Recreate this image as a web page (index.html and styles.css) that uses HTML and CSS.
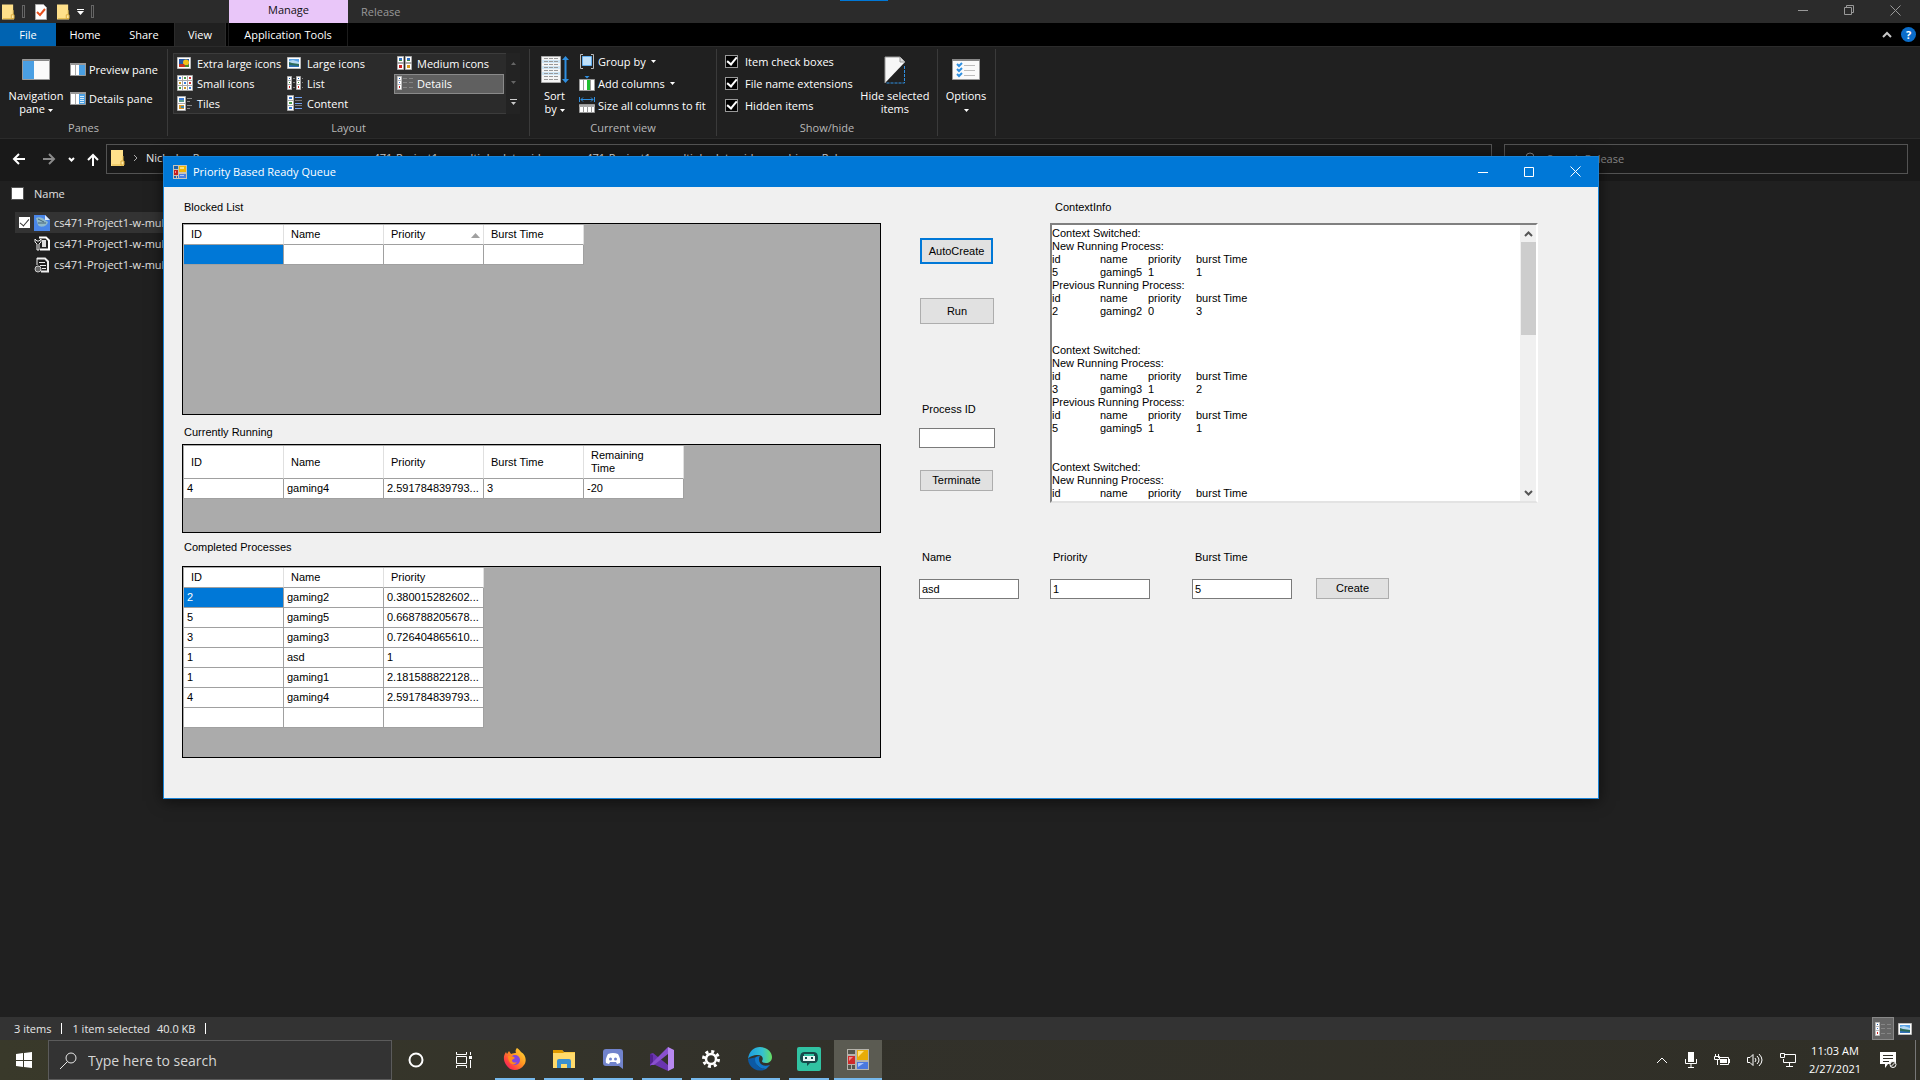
FILE: index.html
```html
<!DOCTYPE html>
<html lang="en">
<head>
<meta charset="utf-8">
<title>Priority Based Ready Queue</title>
<link rel="stylesheet" href="styles.css">
</head>
<body>
<svg class="defs" aria-hidden="true">
  <symbol id="folder" viewBox="0 0 14 16"><path d="M0 0h12v12h1v4H0z" fill="#ffe08a"/><path d="M12 6v9H1" fill="none" stroke="#e6bd4f"/><path d="M10 11h3v4h-3z" fill="#ffe9a6" stroke="#d9a93a"/></symbol>
  <symbol id="photo" viewBox="0 0 14 12"><path d="M.5.5h13v11H.5z" fill="#fff" stroke="#bbb"/><path d="M2 2h10v8H2z" fill="#5aa3e6"/><path d="M2 4l4-1 6 2v2H2z" fill="#b5d8f2"/><path d="M2 5l3 1 7 1v2H2z" fill="#2c6b5a"/><path d="M2 8l10 1v1H2z" fill="#2f6fb8"/></symbol>
  <symbol id="pansy" viewBox="0 0 14 12"><path d="M.5.5h13v11H.5z" fill="#fff" stroke="#bbb"/><path d="M2 2h10v8H2z" fill="#2458a8"/><circle cx="9" cy="5.500" r="3" fill="#f2c21b"/><path d="M2 7h5l2 3H2z" fill="#c73320"/><path d="M8 8h4v2H8z" fill="#4a8a2c"/></symbol>
  <symbol id="medium" viewBox="0 0 15 14"><path d="M.5.5h6v6h-6zM8.500.5h6v6h-6zM.5 7.500h6v6h-6zM8.500 7.500h6v6h-6z" fill="#fff" stroke="#aaa"/><path d="M2 2h3v2H2zM10 2h3v2h-3z" fill="#2f6fc4"/><path d="M2 4h3v1H2zM10 4h3v1h-3z" fill="#3b8b4a"/><path d="M2 9h3v3H2z" fill="#c22"/><path d="M10 9h3v3h-3z" fill="#d69b1c"/></symbol>
  <symbol id="small" viewBox="0 0 16 16"><path d="M.5.5h15v15H.5zM5.500 0v16M10.500 0v16M0 5.500h16M0 10.500h16" fill="#fff" stroke="#aaa"/><path d="M2 2h2v2H2zM7 7h2v2H7zM12 12h2v2h-2z" fill="#3a7bd5"/><path d="M7 2h2v2H7zM2 12h2v2H2z" fill="#4a9a4a"/><path d="M12 2h2v2h-2zM12 7h2v2h-2z" fill="#c33"/><path d="M2 7h2v2H2zM7 12h2v2H7z" fill="#c9962a"/></symbol>
  <symbol id="list" viewBox="0 0 16 14"><path d="M.5.5h4v4h-4zM.5 4.500h4v4h-4zM.5 8.500h4v5h-4zM9.500.5h4v4h-4zM9.500 4.500h4v4h-4zM9.500 8.500h4v5h-4z" fill="#fff" stroke="#aaa"/><path d="M2 2h1v1H2zM11 2h1v1h-1z" fill="#15a"/><path d="M2 6h1v1H2zM11 6h1v1h-1z" fill="#383"/><path d="M2 10h1v2H2zM11 10h1v2h-1z" fill="#c22"/><path d="M6 2.500h2M6 6.500h2M6 11.500h2M15 2.500h1M15 6.500h1M15 11.500h1" stroke="#888"/></symbol>
  <symbol id="details" viewBox="0 0 16 14"><path d="M.5.5h4v4h-4zM.5 4.500h4v4h-4zM.5 8.500h4v5h-4z" fill="#fff" stroke="#bbb"/><path d="M2 2h1v1H2z" fill="#15a"/><path d="M2 6h1v1H2z" fill="#47c"/><path d="M2 10h1v2H2z" fill="#c22"/><path d="M6 2.500h4M12 2.500h4M6 6.500h4M12 6.500h4M6 11.500h4M12 11.500h4" stroke="#858585"/></symbol>
  <symbol id="tiles" viewBox="0 0 16 15"><path d="M.5.5h8v7h-8zM.5 7.500h8v7h-8z" fill="#fff" stroke="#aaa"/><path d="M2 2h5v2H2z" fill="#3a7bd5"/><path d="M2 4h5v2H2z" fill="#5a9a8a"/><path d="M2 9h5v4H2z" fill="#d6952a"/><path d="M4 10h3v2H4z" fill="#48a"/><path d="M10 2.500h5M10 5.500h3M10 9.500h5M10 12.500h3" stroke="#888"/></symbol>
  <symbol id="content" viewBox="0 0 16 16"><path d="M.5.5h6v5h-6zM.5 5.500h6v5h-6zM.5 10.500h6v5h-6z" fill="#fff" stroke="#aaa"/><path d="M2 2h3v2H2zM2 12h3v2H2z" fill="#3a7bd5"/><path d="M2 7h3v2H2z" fill="#4a9a4a"/><path d="M8 2.500h7M8 8.500h7M8 13.500h7" stroke="#6f9ff0"/><path d="M8 5.500h7M8 10.500h7" stroke="#777"/></symbol>
  <symbol id="form" viewBox="0 0 14 14"><path d="M0 0h14v14H0z" fill="#c9c4b8"/><path d="M1 1h4v3H1zM1 11h2v2H1zM4 11h1v2H4z" fill="#1b62ad"/><path d="M6 1h7v6H6z" fill="#f2b705"/><path d="M7 2h4v2H7z" fill="#ffe27a"/><path d="M1 5h4v5H1z" fill="#c21f1f"/><path d="M2 6h1v2H2z" fill="#f59090"/><path d="M6 9h7v4H6z" fill="#4d7fe0"/><path d="M7 10h4v1H7z" fill="#a9c5ff"/></symbol>
  <symbol id="close" viewBox="0 0 11 11"><path d="M.5.5l10 10M10.500.5l-10 10" stroke="currentColor" fill="none"/></symbol>
  <symbol id="minimize" viewBox="0 0 10 10"><path d="M0 5.500h10" stroke="currentColor"/></symbol>
  <symbol id="drop" viewBox="0 0 5 3"><path d="M0 0h5L2.500 3z" fill="currentColor"/></symbol>
</svg>

<main class="explorer">
  <header class="titlebar">
    <div class="quick">
      <svg width="13" height="16"><use href="#folder"/></svg>
      <i class="grip"></i>
      <svg width="12" height="16" viewBox="0 0 12 16"><path d="M.5.5h8l3 3v12H.5z" fill="#fff" stroke="#aaa"/><path d="M2 8l3 3 5-6" fill="none" stroke="#e8501e" stroke-width="2"/></svg>
      <svg width="13" height="16"><use href="#folder"/></svg>
      <svg class="more" width="7" height="6" viewBox="0 0 7 6"><path d="M0 .5h7" stroke="#fff"/><path d="M0 2h7L3.500 6z" fill="#fff"/></svg>
      <i class="grip"></i>
    </div>
    <div class="context-tab">Manage</div>
    <span class="window-name">Release</span>
    <i class="marker"></i>
    <div class="controls">
      <button aria-label="Minimize Release"><svg width="10" height="10"><use href="#minimize"/></svg></button>
      <button aria-label="Restore Release"><svg width="10" height="10" viewBox="0 0 10 10"><path d="M.5 2.500h7v7h-7zM2.500 2V.5h7v7H8" fill="none" stroke="currentColor"/></svg></button>
      <button aria-label="Close Release"><svg width="11" height="11"><use href="#close"/></svg></button>
    </div>
  </header>

  <nav class="tabs">
    <button class="tab file">File</button>
    <button class="tab home">Home</button>
    <button class="tab share">Share</button>
    <button class="tab view">View</button>
    <button class="tab tools">Application Tools</button>
    <div class="tabs-end">
      <svg width="10" height="7" viewBox="0 0 10 7"><path d="M1 6l4-4 4 4" fill="none" stroke="#c8c8c8" stroke-width="2"/></svg>
      <button class="help" aria-label="Help">?</button>
    </div>
  </nav>

  <section class="ribbon">
    <div class="group panes">
      <div class="group-body">
        <button class="big">
          <svg width="28" height="21" viewBox="0 0 28 21"><path d="M.5.5h27v20H.5z" fill="#fafafa" stroke="#9a9a9a"/><path d="M1 1h26v1H1z" fill="#888"/><path d="M1 2h11v18H1z" fill="#4a9fe3"/></svg>
          <span>Navigation<br>pane <svg width="5" height="3"><use href="#drop"/></svg></span>
        </button>
        <div class="stack pane-stack">
          <button class="small"><svg width="16" height="13" viewBox="0 0 16 13"><path d="M.5.5h15v12H.5z" fill="#fff" stroke="#999"/><path d="M0 0h16v2H0z" fill="#999"/><path d="M5.500 2v10" stroke="#aaa"/><path d="M9 2h6v10H9z" fill="#4a9fe3"/></svg>Preview pane</button>
          <button class="small"><svg width="16" height="13" viewBox="0 0 16 13"><path d="M.5.5h15v12H.5z" fill="#fff" stroke="#999"/><path d="M0 0h16v2H0z" fill="#999"/><path d="M5.500 2v10" stroke="#aaa"/><path d="M9 2h6v10H9z" fill="#4a9fe3"/><path d="M10 4.500h4M10 6.500h4M10 8.500h4M10 10.500h4" stroke="#d9ecfb"/></svg>Details pane</button>
        </div>
      </div>
      <h2>Panes</h2>
    </div>
    <div class="group layout">
      <div class="group-body">
        <div class="gallery">
          <button><svg width="14" height="12"><use href="#pansy"/></svg>Extra large icons</button>
          <button><svg width="14" height="12"><use href="#photo"/></svg>Large icons</button>
          <button><svg width="15" height="14"><use href="#medium"/></svg>Medium icons</button>
          <button><svg width="16" height="16"><use href="#small"/></svg>Small icons</button>
          <button><svg width="16" height="14"><use href="#list"/></svg>List</button>
          <button class="selected"><svg width="16" height="14"><use href="#details"/></svg>Details</button>
          <button><svg width="16" height="15"><use href="#tiles"/></svg>Tiles</button>
          <button><svg width="16" height="16"><use href="#content"/></svg>Content</button>
        </div>
        <div class="gallery-scroll">
          <svg width="5" height="3" viewBox="0 0 5 3"><path d="M0 3h5L2.500 0z" fill="#666"/></svg>
          <svg width="5" height="3" class="dim"><use href="#drop"/></svg>
          <svg width="7" height="6" viewBox="0 0 7 6"><path d="M0 .5h7" stroke="#ccc"/><path d="M1 3h5L3.500 6z" fill="#ccc"/></svg>
        </div>
      </div>
      <h2>Layout</h2>
    </div>
    <div class="group current">
      <div class="group-body">
        <button class="big sort">
          <svg width="28" height="27" viewBox="0 0 28 27"><path d="M.5.5h19v26H.5z" fill="#f5f5f5" stroke="#aaa"/><path d="M1 4h18v3H1zM1 10h18v3H1zM1 16h18v3H1z" fill="#cfe6f5"/><path d="M3 2.500h14M3 5.500h14M3 8.500h14M3 11.500h14M3 14.500h14M3 17.500h14M3 20.500h14M3 23.500h14" stroke="#999" stroke-dasharray="4 1"/><path d="M24.500 2v23" stroke="#2f8fe0" stroke-width="2"/><path d="M21 4l3.500-4L28 4zM21 23l3.500 4 3.500-4z" fill="#2f8fe0"/></svg>
          <span>Sort<br>by <svg width="5" height="3"><use href="#drop"/></svg></span>
        </button>
        <div class="stack">
          <button class="small"><svg width="16" height="15" viewBox="0 0 16 15"><path d="M4 .5H1.500v14H4M12 .5h2.500v14H12" fill="none" stroke="#bbb"/><path d="M3.500 2.500h9v9h-9z" fill="#bfe0fa" stroke="#62aef0"/></svg>Group by <svg width="5" height="3"><use href="#drop"/></svg></button>
          <button class="small"><svg width="16" height="15" viewBox="0 0 16 15"><path d="M5.500 0h5L8 2.500z" fill="#2f8fe0"/><path d="M.5 3.500h15v11H.5z" fill="#fff" stroke="#999"/><path d="M4.500 4v10M11.500 4v10" stroke="#999"/><path d="M8 4h3v10H8z" fill="#1fbf2f"/></svg>Add columns <svg width="5" height="3"><use href="#drop"/></svg></button>
          <button class="small"><svg width="16" height="16" viewBox="0 0 16 16"><path d="M.5 0v5M15.500 0v5M2 2.500h12M4 .5l-2 2 2 2M12 .5l2 2-2 2" fill="none" stroke="#2f8fe0"/><path d="M.5 7.500h15v8H.5z" fill="#fff" stroke="#999"/><path d="M0 8h16v2H0z" fill="#aaa"/><path d="M4.500 10v5M8.500 10v5M12.500 10v5" stroke="#999"/></svg>Size all columns to fit</button>
        </div>
      </div>
      <h2>Current view</h2>
    </div>
    <div class="group showhide">
      <div class="group-body">
        <div class="stack">
          <label class="tick"><input type="checkbox" checked>Item check boxes</label>
          <label class="tick"><input type="checkbox" checked>File name extensions</label>
          <label class="tick"><input type="checkbox" checked>Hidden items</label>
        </div>
        <button class="big hide">
          <svg width="22" height="28" viewBox="0 0 22 28"><path d="M1 1h15l5 5L1 27z" fill="#f7f7f7"/><path d="M1 27V1h15l4 5" fill="none" stroke="#999"/><path d="M16 1v5h5" fill="#ddd" stroke="#999"/><path d="M20.500 10v17H2" fill="none" stroke="#2f8fe0" stroke-dasharray="3 1"/></svg>
          <span>Hide selected<br>items</span>
        </button>
      </div>
      <h2>Show/hide</h2>
    </div>
    <div class="group options">
      <div class="group-body">
        <button class="big">
          <svg width="28" height="21" viewBox="0 0 28 21"><path d="M.5.5h27v20H.5z" fill="#fafafa" stroke="#9a9a9a"/><path d="M0 0h28v2H0z" fill="#888"/><path d="M5 5l2 2 3-3M5 10l2 2 3-3M5 15l2 2 3-3" fill="none" stroke="#2f8fe0" stroke-width="2"/><path d="M12 6.500h11M12 11.500h11M12 16.500h11" stroke="#bbb"/></svg>
          <span>Options<br><svg width="5" height="3"><use href="#drop"/></svg></span>
        </button>
      </div>
    </div>
  </section>

  <section class="location">
    <div class="history">
      <svg width="13" height="12" viewBox="0 0 13 12"><path d="M13 6H2M7 1L2 6l5 5" fill="none" stroke="#fff" stroke-width="2"/></svg>
      <svg width="13" height="12" viewBox="0 0 13 12"><path d="M0 6h11M6 1l5 5-5 5" fill="none" stroke="#8a8a8a" stroke-width="2"/></svg>
      <svg width="7" height="5" viewBox="0 0 7 5"><path d="M1 1l2.500 2.500L6 1" fill="none" stroke="#fff" stroke-width="2"/></svg>
      <svg width="12" height="13" viewBox="0 0 12 13"><path d="M6 13V2M1 7l5-5 5 5" fill="none" stroke="#fff" stroke-width="2"/></svg>
    </div>
    <div class="address">
      <svg width="14" height="16"><use href="#folder"/></svg>
      <svg width="5" height="8" viewBox="0 0 5 8"><path d="M1 1l3 3-3 3" fill="none" stroke="#aaa"/></svg>
      <span class="crumb first">Nicholas P</span>
      <span class="crumb">cs471-Project1-w-multiple-data-videos</span>
      <span class="crumb">cs471-Project1-w-multiple-data-videos</span>
      <span class="crumb">bin</span>
      <span class="crumb">Release</span>
    </div>
    <div class="find">
      <svg width="12" height="12" viewBox="0 0 12 12"><circle cx="7" cy="5" r="4" fill="none" stroke="#888"/><path d="M4 8l-4 4" stroke="#888"/></svg>
      <input type="text" aria-label="Search Release" placeholder="Search Release">
    </div>
  </section>

  <section class="files">
    <label class="file-head"><input type="checkbox">Name</label>
    <label class="file-row picked"><input type="checkbox" checked>
      <svg width="16" height="16" viewBox="0 0 16 16"><path d="M0 0h11l5 5v11H0z" fill="#4a86e8"/><path d="M11 0l5 5h-5z" fill="#dce8fb"/><path d="M2 3c3-2 8 0 9 2l3 2c-1 5-8 6-10 3z" fill="#8fb9c9"/><path d="M4 4l6 3M4 8h8" stroke="#47657a"/></svg>
      cs471-Project1-w-multiple</label>
    <label class="file-row"><input type="checkbox">
      <svg width="16" height="16" viewBox="0 0 16 16"><path d="M5 1.500h7l3 3v9H6" fill="none" stroke="#fff" stroke-width="2"/><path d="M8 4h4v7H8z" fill="#ddd"/><path d="M1 3v3l2 2v6h2V8l2-2V3L5 5H3z" fill="#202020" stroke="#eee"/></svg>
      cs471-Project1-w-multiple</label>
    <label class="file-row"><input type="checkbox">
      <svg width="16" height="16" viewBox="0 0 16 16"><path d="M3 1.500h8l3 3v10H7" fill="none" stroke="#eee" stroke-width="2"/><path d="M3 1v7M5 5.500h6M6 8.500h6M8 11.500h4" stroke="#eee"/><circle cx="4" cy="12" r="3" fill="#666" stroke="#ccc"/></svg>
      cs471-Project1-w-multiple</label>
  </section>

  <footer class="status">
    <span>3 items</span><i></i><span>1 item selected</span><span class="size">40.0 KB</span><i></i>
    <div class="view-switch">
      <button class="on" aria-label="Details view"><svg width="16" height="14"><use href="#details"/></svg></button>
      <button aria-label="Large icon view"><svg width="14" height="12"><use href="#photo"/></svg></button>
    </div>
  </footer>
</main>

<section class="window">
  <header class="window-title">
    <svg width="14" height="14"><use href="#form"/></svg>
    <h1>Priority Based Ready Queue</h1>
    <div class="controls">
      <button aria-label="Minimize"><svg width="10" height="10"><use href="#minimize"/></svg></button>
      <button aria-label="Maximize"><svg width="10" height="10" viewBox="0 0 10 10"><path d="M.5.5h9v9h-9z" fill="none" stroke="currentColor"/></svg></button>
      <button aria-label="Close"><svg width="11" height="11"><use href="#close"/></svg></button>
    </div>
  </header>
  <div class="window-body">
    <div class="queues">
      <h2 id="blocked">Blocked List</h2>
      <div class="grid tall">
        <table aria-labelledby="blocked">
          <thead><tr><th>ID</th><th>Name</th><th class="sorted">Priority<svg width="9" height="5" viewBox="0 0 9 5"><path d="M0 5h9L4.500 0z" fill="#a0a0a0"/></svg></th><th>Burst Time</th></tr></thead>
          <tbody><tr><td class="current-cell"></td><td></td><td></td><td></td></tr></tbody>
        </table>
      </div>
      <h2 id="running" class="running">Currently Running</h2>
      <div class="grid short">
        <table aria-labelledby="running">
          <thead><tr class="double"><th>ID</th><th>Name</th><th>Priority</th><th>Burst Time</th><th>Remaining<br>Time</th></tr></thead>
          <tbody><tr><td>4</td><td>gaming4</td><td>2.591784839793...</td><td>3</td><td>-20</td></tr></tbody>
        </table>
      </div>
      <h2 id="completed" class="completed">Completed Processes</h2>
      <div class="grid tall">
        <table aria-labelledby="completed">
          <thead><tr><th>ID</th><th>Name</th><th>Priority</th></tr></thead>
          <tbody>
            <tr><td class="current-cell">2</td><td>gaming2</td><td>0.380015282602...</td></tr>
            <tr><td>5</td><td>gaming5</td><td>0.668788205678...</td></tr>
            <tr><td>3</td><td>gaming3</td><td>0.726404865610...</td></tr>
            <tr><td>1</td><td>asd</td><td>1</td></tr>
            <tr><td>1</td><td>gaming1</td><td>2.181588822128...</td></tr>
            <tr><td>4</td><td>gaming4</td><td>2.591784839793...</td></tr>
            <tr><td></td><td></td><td></td></tr>
          </tbody>
        </table>
      </div>
    </div>
    <div class="side">
      <div class="upper">
        <div class="commands">
          <button class="push focus">AutoCreate</button>
          <button class="push run">Run</button>
          <label for="pid">Process ID</label>
          <input id="pid" class="box" type="text">
          <button class="push low">Terminate</button>
        </div>
        <div class="context">
          <label for="info">ContextInfo</label>
          <div class="rich">
            <textarea id="info" readonly>Context Switched:
New Running Process:
id	name	priority	burst Time
5	gaming5	1	1
Previous Running Process:
id	name	priority	burst Time
2	gaming2	0	3


Context Switched:
New Running Process:
id	name	priority	burst Time
3	gaming3	1	2
Previous Running Process:
id	name	priority	burst Time
5	gaming5	1	1


Context Switched:
New Running Process:
id	name	priority	burst Time</textarea>
            <div class="scroll">
              <svg width="9" height="17" viewBox="0 0 9 17"><path d="M1 11l3.500-3.500L8 11" fill="none" stroke="#555" stroke-width="2"/></svg>
              <i></i>
              <svg width="9" height="17" viewBox="0 0 9 17"><path d="M1 7l3.500 3.500L8 7" fill="none" stroke="#555" stroke-width="2"/></svg>
            </div>
          </div>
        </div>
      </div>
      <form class="entry">
        <div class="field"><label for="name">Name</label><input id="name" class="box" type="text" value="asd"></div>
        <div class="field prio"><label for="prio">Priority</label><input id="prio" class="box" type="text" value="1"></div>
        <div class="field burst"><label for="burst">Burst Time</label><input id="burst" class="box" type="text" value="5"></div>
        <button type="button" class="push low create">Create</button>
      </form>
    </div>
  </div>
</section>

<footer class="taskbar">
  <button class="start" aria-label="Start"><svg width="16" height="16" viewBox="0 0 16 16"><path d="M0 2l7-1v7H0zM8 1l8-1v8H8zM0 9h7v6l-7-1zM8 9h8v7l-8-1z" fill="#fff"/></svg></button>
  <div class="search">
    <svg width="17" height="17" viewBox="0 0 17 17"><circle cx="11" cy="6" r="5" fill="none" stroke="#e8e8e8"/><path d="M7.500 9.500L0 17" stroke="#e8e8e8"/></svg>
    <input type="text" aria-label="Search" placeholder="Type here to search">
  </div>
  <button class="plain" aria-label="Cortana"><svg width="16" height="16" viewBox="0 0 16 16"><circle cx="8" cy="8" r="6.500" fill="none" stroke="#fff" stroke-width="2"/></svg></button>
  <button class="plain" aria-label="Task view"><svg width="16" height="16" viewBox="0 0 16 16"><path d="M.5 0v2.500h10V0M.5 4.500h10v7H.5zM.5 16v-2.500h10V16M14.500 0v3M14.500 8v8" fill="none" stroke="#fff"/><path d="M13 4h3v3h-3z" fill="#fff"/></svg></button>
  <div class="apps">
    <button aria-label="Firefox"><svg width="24" height="24" viewBox="0 0 24 24"><defs><linearGradient id="fx" x1="1" y1="0" x2="0" y2="1"><stop offset="0" stop-color="#ffe63c"/><stop offset=".45" stop-color="#ff9220"/><stop offset=".75" stop-color="#ff3a44"/><stop offset="1" stop-color="#e0127c"/></linearGradient></defs><path d="M14 1c2 1 3 3 4 4 5 3 6 9 3 13-4 6-13 7-17 1C0 14 0 9 3 5l1 2 2-3 2 3c2-1 4-1 5-1-1-2 0-4 1-5z" fill="url(#fx)"/><circle cx="12" cy="13" r="5" fill="#8146df"/><path d="M5 9c3 0 5 0 7 2l-3 2c0 3 3 3 5 2-3 5-9 2-9-6z" fill="#ff8a1c"/></svg></button>
    <button aria-label="File Explorer"><svg width="22" height="18" viewBox="0 0 22 18"><path d="M0 0h9l2 2h11v16H0z" fill="#f7c844"/><path d="M0 0h9l2 3H0z" fill="#e09a00"/><path d="M0 3h22v15H0z" fill="#ffda6b"/><path d="M4 18v-7q0-2 2-2h10q2 0 2 2v7h-4v-4H8v4z" fill="#3b8fd0"/></svg></button>
    <button aria-label="Discord"><svg width="20" height="20" viewBox="0 0 20 20"><path d="M3 0h14q3 0 3 3v17l-4-3H3q-3 0-3-3V3q0-3 3-3z" fill="#7183cc"/><path d="M5 5q5-2 10 0 3 5 2 9l-3 1-1-2H7l-1 2-3-1q-1-4 2-9z" fill="#fff"/><circle cx="7.500" cy="10" r="1.500" fill="#7183cc"/><circle cx="12.500" cy="10" r="1.500" fill="#7183cc"/></svg></button>
    <button aria-label="Visual Studio"><svg width="24" height="24" viewBox="0 0 24 24"><path d="M0 7l3-1 15 12v6L3 17l-3 2z" fill="#6a35b0"/><path d="M0 7v12l3-2V8z" fill="#52218f"/><path d="M0 18L18 0v7L4 18z" fill="#8a50cf"/><path d="M18 0l6 3v18l-6 3z" fill="#b888f0"/></svg></button>
    <button aria-label="Settings"><svg width="18" height="18" viewBox="0 0 18 18"><circle cx="9" cy="9" r="7.500" fill="none" stroke="#fff" stroke-width="3" stroke-dasharray="3 2.890"/><circle cx="9" cy="9" r="5" fill="none" stroke="#fff" stroke-width="2.500"/></svg></button>
    <button aria-label="Edge"><svg width="24" height="24" viewBox="0 0 24 24"><defs><linearGradient id="ed"><stop offset="0" stop-color="#1b9de2"/><stop offset=".6" stop-color="#35c1d0"/><stop offset="1" stop-color="#66df62"/></linearGradient></defs><path d="M0 12a12 12 0 0 0 18 10C10 22 6 16 9 10z" fill="#0c59a4"/><path d="M0 12C1 4 6 0 12 0c7 0 12 5 12 10 0 4-3 6-6 6-3 0-4-1-4-2 2-3 0-6-4-6-5 0-9 2-10 4z" fill="url(#ed)"/><path d="M7 12c0 6 5 10 11 10l4-4c-6 2-11 0-11-6 0-2 1-3 1-3-3 0-5 1-5 3z" fill="#1177c9"/></svg></button>
    <button aria-label="Streamlabs"><svg width="24" height="24" viewBox="0 0 24 24"><path d="M2 0h20q2 0 2 2v20q0 2-2 2H2q-2 0-2-2V2q0-2 2-2z" fill="#31c3a2"/><path d="M7 5h10q4 0 4 6 0 5-4 5h-4l-3 3v-3H7q-4 0-4-5 0-6 4-6z" fill="#17494a"/><path d="M7 7h10v2H7z" fill="#31c3a2"/><path d="M6 9h12v5H6z" fill="#e9f7f4"/><path d="M8 10h2v2H8zM14 10h2v2h-2z" fill="#17494a"/></svg></button>
    <button aria-label="Priority Based Ready Queue" class="active"><svg width="22" height="21" viewBox="0 0 22 21"><path d="M0 0h22v21H0z" fill="#b5b3ac"/><path d="M1 1h7v4H1zM1 16h3v4H1zM5 16h3v4H5z" fill="#55554c"/><path d="M10 1h11v10H10z" fill="#e8ac06"/><path d="M11 2h6L11 8z" fill="#ffe079"/><path d="M1 7h7v8H1z" fill="#cf2a2a"/><path d="M2 8h4l-4 4z" fill="#f28b8b"/><path d="M10 13h11v7H10z" fill="#4a78e0"/><path d="M11 14h6l-6 4z" fill="#a8c4ff"/></svg></button>
  </div>
  <div class="tray">
    <svg width="12" height="7" viewBox="0 0 12 7"><path d="M1 6l5-5 5 5" fill="none" stroke="#fff"/></svg>
    <svg width="12" height="16" viewBox="0 0 12 16"><path d="M3 0h6v10H3z" fill="#fff"/><path d="M.5 7v4.500h11V7M6 12v3M3 15.500h6" fill="none" stroke="#fff"/></svg>
    <svg width="16" height="12" viewBox="0 0 16 12"><path d="M4 3.500h10.500v7H6M1.500 0v3M4.500 0v3M.5 2.500h5v3h-5zM3.500 6v5" fill="none" stroke="#fff"/><path d="M6 5h7v4H6zM15 5h1v4h-1z" fill="#fff"/></svg>
    <svg width="16" height="14" viewBox="0 0 16 14"><path d="M.5 4.500H3l3-3v11l-3-3H.5zM8 5q2 2 0 4M10 3q4 4 0 8M12 1q6 6 0 12" fill="none" stroke="#fff"/></svg>
    <svg width="16" height="14" viewBox="0 0 16 14"><path d="M5 1.500h10.500v8H3.500V6M9.500 10v3M6 13.500h7M.5.500h4v4h-4z" fill="none" stroke="#fff"/></svg>
    <time>11:03 AM<br>2/27/2021</time>
    <svg class="note" width="17" height="17" viewBox="0 0 17 17"><path d="M0 0h16v12H8l-3 4v-4H0z" fill="#fff"/><path d="M3 3.500h10M3 6.500h10M3 9.500h6" stroke="#32312a"/><circle cx="13" cy="12.500" r="3" fill="#32312a" stroke="#fff"/><path d="M11 14.500l4-4" stroke="#fff"/></svg>
    <i class="peek"></i>
  </div>
</footer>
</body>
</html>
```
FILE: styles.css
```css
* { box-sizing: border-box; }

body {
  margin: 0;
  min-height: 100vh;
  display: flex;
  flex-direction: column;
  background: #202020;
  color: #fff;
  font: 11px/13px "Open Sans", "Noto Sans", sans-serif;
}

h1, h2 { margin: 0; font: inherit; }
button { margin: 0; padding: 0; border: 0; background: none; color: inherit; font: inherit; }
input, textarea { margin: 0; font: inherit; }
svg { flex: none; }
.defs { display: none; }

/* File Explorer */
.explorer { flex: 1; display: flex; flex-direction: column; }

.titlebar { height: 23px; display: flex; background: #2b2b2b; }
.quick { width: 229px; padding-left: 2px; display: flex; align-items: center; gap: 7px; }
.quick i + svg, .quick svg + svg { margin-left: 3px; }
.quick svg + .more { margin-left: 0; }
.grip { width: 3px; height: 13px; border: 1px solid #666; }
.context-tab { width: 119px; padding-top: 3px; background: #e9c6f9; color: #111; text-align: center; }
.window-name { width: 492px; padding: 5px 0 0 13px; color: #999; }
.marker { width: 48px; height: 1px; background: #0078d7; }

.controls { margin-left: auto; display: flex; }
.controls button { width: 46px; display: grid; place-items: center; }
.titlebar .controls { padding: 0 2px 3px 0; color: #999; }

.tabs { height: 23px; display: flex; background: #000; }
.tab { text-align: center; }
.file { width: 56px; background: #0063b1; }
.home { width: 58px; }
.share { width: 60px; }
.view { width: 52px; background: #202020; border: 1px solid #2b2b2b; border-width: 0 1px; }
.tools { width: 120px; margin-left: 2px; border: 1px solid #1c1c1c; border-width: 0 1px; }
.tabs-end { margin-left: auto; padding-right: 4px; display: flex; align-items: center; gap: 9px; }
.help { width: 15px; height: 15px; border-radius: 50%; background: #0a6cc9; font-weight: 700; }

.ribbon { height: 93px; display: flex; border: 1px solid #2b2b2b; border-width: 1px 0; }
.group { display: flex; flex-direction: column; border-right: 1px solid #3a3a3a; margin: 2px 0; }
.group-body { height: 73px; display: flex; }
.group h2 { color: #b8b8b8; text-align: center; line-height: 17px; }
.panes { width: 168px; }
.layout { width: 362px; }
.current { width: 187px; }
.showhide { width: 221px; }
.options { width: 58px; }

.big { width: 72px; padding-top: 10px; display: flex; flex-direction: column; align-items: center; line-height: 13px; }
.big span { margin-top: 9px; }
.big span svg { vertical-align: middle; }
.small, .tick { display: flex; align-items: center; gap: 3px; height: 22px; white-space: nowrap; }
.stack { padding-top: 1px; }
.pane-stack { padding-top: 8px; margin-left: -2px; }
.pane-stack .small { height: 29px; padding-bottom: 4px; }
.sort, .hide { padding-top: 7px; }
.sort { width: 49px; }
.sort span, .hide span { margin-top: 6px; }
.hide span { margin-top: 5px; }
.hide { width: 86px; margin-left: auto; }
.options .big { width: 56px; }
.showhide .stack { padding-left: 8px; }
.tick { gap: 7px; }
.small svg + svg { margin-left: 2px; }

input[type="checkbox"] { appearance: none; flex: none; width: 13px; height: 13px; border: 1px solid #999; background: #000; display: grid; place-items: center; }
input[type="checkbox"]:checked::after { content: ""; width: 4px; height: 8px; margin-top: -2px; border: solid #fff; border-width: 0 2px 2px 0; transform: rotate(40deg); }

.gallery { width: 333px; height: 61px; margin: 4px 0 0 5px; display: grid; grid-template-columns: 110px 110px 110px; grid-template-rows: 20px 20px 20px; background: #2b2b2b; border: 1px solid #3c3c3c; border-right: 0; }
.gallery button { display: grid; grid-template-columns: 18px auto; align-items: center; justify-content: start; column-gap: 2px; padding: 0 0 2px 3px; text-align: left; white-space: nowrap; }
.gallery .selected { background: #606060; outline: 1px solid #8a8a8a; outline-offset: -1px; }
.gallery-scroll { width: 14px; margin-top: 4px; padding: 9px 0; height: 61px; display: flex; flex-direction: column; align-items: center; justify-content: space-between; background: #232323; }
.dim { color: #666; }

.location { height: 42px; display: grid; grid-template-columns: 82px minmax(0, 1386fr) minmax(0, 404fr); column-gap: 12px; padding: 5px 12px 7px; background: #191919; }
.history { display: flex; align-items: center; gap: 12px; }
.history svg:first-child { margin-right: 6px; }
.address { display: flex; align-items: center; border: 1px solid #535353; padding: 0 0 3px 4px; color: #eee; white-space: nowrap; overflow: hidden; }
.address svg + svg { margin-left: 8px; }
.crumb { margin-left: 17px; }
.first { width: 200px; margin-left: 8px; }
.find { padding: 0 0 2px 18px; display: flex; align-items: center; gap: 12px; border: 1px solid #535353; }
.find input { flex: 1; min-width: 0; padding: 0; border: 0; background: none; color: #fff; }
.find input::placeholder { color: #858585; opacity: 1; }

.files { flex: 1; }
.file-head, .file-row { display: flex; align-items: center; color: #e0e0e0; white-space: nowrap; }
.file-head { height: 25px; margin-bottom: 6px; padding-left: 11px; gap: 10px; }
.file-row { width: 200px; height: 21px; margin-left: 15px; padding-left: 4px; gap: 4px; }
.picked { background: #333; }
.file-head input, .file-row input { background: #fff; border-color: #555; }
.file-row input { width: 11px; height: 11px; border: 0; }
.file-row input:not(:checked) { visibility: hidden; }
.file-row input:checked::after { border-color: #333; border-width: 0 1px 1px 0; }

.status { height: 23px; display: flex; align-items: center; padding: 0 4px 0 14px; background: #333; color: #e8e8e8; }
.status i { width: 1px; height: 11px; margin: 0 10px; background: #fff; }
.size { margin-left: 7px; }
.view-switch { margin-left: auto; display: flex; }
.view-switch button { width: 22px; height: 23px; display: grid; place-items: center; }
.view-switch .on { background: #666; border: 1px solid #888; }

/* Ready queue window, floating over the desktop */
.window { position: absolute; left: 163px; right: 321px; top: 156px; border: 1px solid #1883d7; background: #f0f0f0; color: #000; font: 11px/13px "Liberation Sans", Arial, sans-serif; box-shadow: 0 2px 14px rgba(0, 0, 0, .6); }
.window-title { height: 30px; display: flex; align-items: center; padding-left: 9px; gap: 6px; background: #0078d7; color: #fff; font-family: "Open Sans", "Noto Sans", sans-serif; }
.window-title h1 { padding-bottom: 2px; }
.window-title .controls { height: 30px; padding-bottom: 1px; }
.window-body { display: flex; gap: 38px; padding: 12px 60px 40px 18px; }
.window h2, .window label { display: block; padding-left: 3px; line-height: 16px; }
.queues { flex: 1; min-width: 0; }
.queues h2 { margin-bottom: 8px; padding-left: 2px; }
.queues .running { margin: 9px 0 4px; }
.queues .completed { margin: 6px 0 11px; }
.grid { padding: 1px 0 0 1px; border: 1px solid #000; background: #ababab; }
.tall { height: 192px; }
.short { height: 89px; }

table { border-collapse: separate; border-spacing: 0; table-layout: fixed; width: min-content; }
th, td { width: 100px; min-width: 100px; height: 20px; padding: 0 3px; background: #fff; border: solid #a0a0a0; border-width: 0 1px 1px 0; text-align: left; font-weight: 400; white-space: nowrap; line-height: 13px; }
th { padding: 0 7px; border-right-color: #e0e0e0; }
.double th { height: 33px; }
.sorted svg { float: right; margin: 5px -4px 0 0; }
td.current-cell { background: #0078d7; color: #fff; }

.side { width: 619px; }
.upper { display: flex; }
.commands { width: 131px; padding-top: 39px; display: flex; flex-direction: column; align-items: flex-start; }
.commands .push { margin-left: 1px; }
.commands label { margin: 77px 0 11px; }
.push { width: 73px; height: 26px; background: #e1e1e1; border: 1px solid #adadad; color: #000; }
.focus { border: 2px solid #0078d7; }
.run { width: 74px; margin-top: 34px; }
.low { height: 21px; }
.commands .low { margin-top: 22px; }
.box { display: block; width: 100px; height: 20px; padding: 0 2px; border: 1px solid #7a7a7a; background: #fff; color: #000; }
.commands .box { width: 76px; }
.context { flex: 1; }
.context label { margin-bottom: 8px; padding-left: 5px; }
.rich { height: 280px; display: flex; background: #fff; border: 2px solid; border-color: #808080 #fff #e3e3e3 #808080; }
textarea { flex: 1; min-width: 0; height: 276px; padding: 2px 0 0 0; border: 0; background: none; color: #000; resize: none; overflow: hidden; line-height: 13px; tab-size: 48px; white-space: pre; }
.scroll { width: 16px; display: flex; flex-direction: column; align-items: center; background: #f0f0f0; }
.scroll i { width: 15px; height: 93px; margin-bottom: auto; background: #cdcdcd; }
.entry { display: flex; align-items: flex-end; margin-top: 46px; }
.entry label { margin-bottom: 14px; }
.prio { margin-left: 31px; }
.burst { margin-left: 42px; }
.create { margin-left: 24px; }

/* Taskbar */
.taskbar { height: 40px; display: flex; background: linear-gradient(90deg, #39392a, #32312a 40%, #302f27); }
.taskbar button { display: grid; place-items: center; }
.start { width: 48px; }
.search { width: 344px; display: flex; align-items: center; gap: 11px; padding-left: 11px; background: #333; border: 1px solid #5b5b5b; }
.search input { flex: 1; min-width: 0; padding: 0; border: 0; background: none; color: #fff; font-size: 14px; }
.search input::placeholder { color: #d6d6d6; opacity: 1; }
.plain { width: 48px; }
.apps { display: flex; gap: 9px; margin-left: 7px; }
.apps button { width: 40px; border-bottom: 2px solid #76b9ed; }
.apps .active { width: 48px; margin-left: -4px; background: #5b5b52; }
.tray { margin-left: auto; display: flex; align-items: center; gap: 17px; }
.tray time { width: 60px; margin-left: -8px; text-align: center; line-height: 18px; }
.note { margin-left: -2px; }
.peek { width: 5px; height: 40px; margin-left: 1px; border-left: 1px solid #777; }
```
